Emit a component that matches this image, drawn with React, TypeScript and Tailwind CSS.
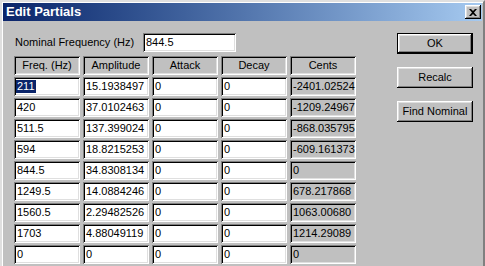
import React from 'react'

const rows = [
  ['211', '15.1938497', '0', '0', '-2401.02524'],
  ['420', '37.0102463', '0', '0', '-1209.24967'],
  ['511.5', '137.399024', '0', '0', '-868.035795'],
  ['594', '18.8215253', '0', '0', '-609.161373'],
  ['844.5', '34.8308134', '0', '0', '0'],
  ['1249.5', '14.0884246', '0', '0', '678.217868'],
  ['1560.5', '2.29482526', '0', '0', '1063.00680'],
  ['1703', '4.88049119', '0', '0', '1214.29089'],
  ['0', '0', '0', '0', '0'],
]

const headers = ['Freq. (Hz)', 'Amplitude', 'Attack', 'Decay', 'Cents']

const sunken =
  'shadow-[inset_1px_1px_#808080,inset_-1px_-1px_#ffffff,inset_2px_2px_#000000,inset_-2px_-2px_#dfdfdf]'
const raised =
  'shadow-[inset_-1px_-1px_#000000,inset_1px_1px_#ffffff,inset_-2px_-2px_#808080,inset_2px_2px_#dfdfdf]'

function Button({ label, isDefault }: { label: string; isDefault?: boolean }) {
  return (
    <div
      className={`h-[21px] w-[76px] flex items-center justify-center text-[11px] text-black bg-[#c0c0c0] ${
        isDefault ? 'border border-black' : ''
      }`}
    >
      <div className={`w-full h-full flex items-center justify-center ${raised}`}>{label}</div>
    </div>
  )
}

export default function App() {
  return (
    <div
      className="w-[485px] h-[266px] overflow-hidden bg-[#c0c0c0] text-[11px] text-black"
      style={{ fontFamily: '"Liberation Sans", Arial, sans-serif' }}
    >
      <div className="h-full border-l-2 border-t-2 border-l-[#dfdfdf] border-t-[#dfdfdf] border-r-2 border-r-[#808080] shadow-[inset_1px_1px_#ffffff]">
        <div className="mx-[1px] mt-[1px] h-[18px] flex items-center justify-between pl-[3px] pr-[1px] bg-gradient-to-r from-[#0a246a] to-[#a6caf0]">
          <span className="text-white font-bold text-[13px]">Edit Partials</span>
          <div className={`w-[16px] h-[14px] bg-[#c0c0c0] flex items-center justify-center ${raised}`}>
            <svg width="8" height="7" viewBox="0 0 8 7">
              <path d="M0 0h2l2 2 2-2h2L5 3.5 8 7H6L4 5 2 7H0l3-3.5z" fill="#000" />
            </svg>
          </div>
        </div>

        <div className="flex pt-[12px]">
          <div className="pl-[12px] w-[395px]">
            <div className="flex items-center h-[19px]">
              <span className="w-[129px] pl-[1px]">Nominal Frequency (Hz)</span>
              <div className={`w-[93px] h-[19px] bg-white flex items-center pl-[3px] ${sunken}`}>844.5</div>
            </div>

            <div className="mt-[4px] grid grid-cols-[66px_66px_66px_66px_66px] gap-x-[3px] gap-y-[2px]">
              {headers.map((h) => (
                <div key={h} className={`h-[19px] flex items-center justify-center bg-[#c0c0c0] ${sunken}`}>
                  {h}
                </div>
              ))}
              {rows.map((r, i) =>
                r.map((v, j) => (
                  <div
                    key={`${i}-${j}`}
                    className={`h-[19px] flex items-center pl-[3px] ${
                      j === 4 ? 'bg-[#c0c0c0]' : 'bg-white'
                    } ${sunken}`}
                  >
                    {i === 0 && j === 0 ? (
                      <span className="bg-[#0a246a] text-white leading-[13px] px-[1px] -ml-[1px]">{v}</span>
                    ) : (
                      v
                    )}
                  </div>
                ))
              )}
            </div>
          </div>

          <div className="flex flex-col gap-[13px]">
            <Button label="OK" isDefault />
            <Button label="Recalc" />
            <Button label="Find Nominal" />
          </div>
        </div>
      </div>
    </div>
  )
}
